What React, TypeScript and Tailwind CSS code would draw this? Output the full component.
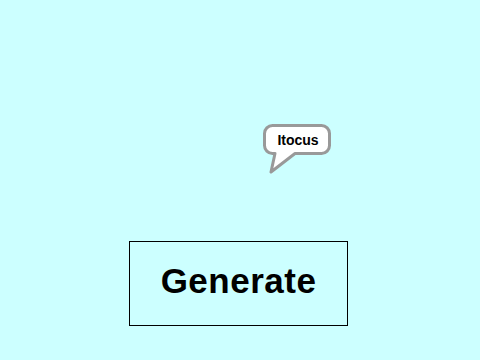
export default function App() {
  return (
    <div className="relative w-[480px] h-[360px] bg-[#ccffff] overflow-hidden" style={{ fontFamily: '"Liberation Sans", Arial, sans-serif' }}>
      {/* speech bubble */}
      <div className="absolute left-[261px] top-[122px] w-[72px] h-[54px]">
        <svg width="72" height="54" viewBox="0 0 72 54" className="absolute inset-0">
          <path
            d="M 11.5 3.5 H 60.5 A 8 8 0 0 1 68.5 11.5 V 23.5 A 8 8 0 0 1 60.5 31.5 H 34 L 10 50 L 14 31.5 H 11.5 A 8 8 0 0 1 3.5 23.5 V 11.5 A 8 8 0 0 1 11.5 3.5 Z"
            fill="#ffffff"
            stroke="#999999"
            strokeWidth="3"
            strokeLinejoin="round"
          />
        </svg>
        <div className="absolute left-[2px] top-[2px] w-[70px] h-[31px] flex items-center justify-center text-[14px] font-bold text-black leading-none">
          Itocus
        </div>
      </div>

      <div className="pt-[241px] pl-[129px]">
        <button className="w-[219px] h-[85px] border border-black bg-transparent flex items-center justify-center pb-[6px] text-[35px] font-bold text-black tracking-[0.5px] leading-none">
          Generate
        </button>
      </div>
    </div>
  );
}
